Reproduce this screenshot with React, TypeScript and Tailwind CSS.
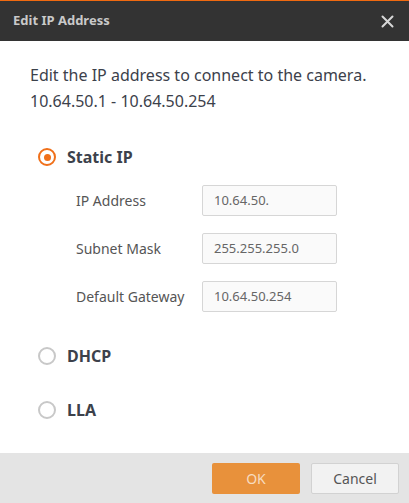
import React, { useState } from 'react';

const font = { fontFamily: '"Noto Sans", "Open Sans", sans-serif' };

function Radio({ checked }: { checked: boolean }) {
  return checked ? (
    <span className="flex h-[18px] w-[18px] items-center justify-center rounded-full border-2 border-[#f0701a]">
      <span className="h-[7px] w-[7px] rounded-full bg-[#f0701a]" />
    </span>
  ) : (
    <span className="h-[18px] w-[18px] rounded-full border-2 border-[#c8c8c8]" />
  );
}

function Field({ label, value }: { label: string; value: string }) {
  return (
    <div className="flex items-center">
      <span className="w-[126px] text-[14px] text-[#555]">{label}</span>
      <div className="flex h-[31px] w-[135px] items-center rounded-[2px] border border-[#d6d6d6] bg-[#fafafa] px-[11px] text-[13px] text-[#666]">
        {value}
      </div>
    </div>
  );
}

export default function App() {
  const [mode, setMode] = useState('static');

  const option = (key: string, label: string) => (
    <button
      onClick={() => setMode(key)}
      className="flex h-[24px] items-center gap-[11px] pl-[8px] text-[16px] font-bold text-[#3c414b]"
    >
      <Radio checked={mode === key} />
      {label}
    </button>
  );

  return (
    <div className="flex h-[503px] w-[409px] flex-col bg-white" style={font}>
      <div className="flex h-[41px] items-center justify-between border-t border-[#f06a10] bg-[#333333] pl-[13px] pr-[15px]">
        <span className="text-[13px] font-bold text-[#c9c9c9]">Edit IP Address</span>
        <svg width="13" height="13" viewBox="0 0 13 13" className="text-[#d8d8d8]">
          <path d="M1.5 1.5 L11.5 11.5 M11.5 1.5 L1.5 11.5" stroke="currentColor" strokeWidth="2" strokeLinecap="round" />
        </svg>
      </div>

      <div className="flex-1 pl-[30px] pt-[21px]">
        <p className="text-[16px] leading-[26px] text-[#3c414b]">
          Edit the IP address to connect to the camera.
          <br />
          10.64.50.1 - 10.64.50.254
        </p>

        <div className="mt-[31px]">{option('static', 'Static IP')}</div>

        <div className="mt-[16px] flex flex-col gap-[17px] pl-[46px]">
          <Field label="IP Address" value="10.64.50." />
          <Field label="Subnet Mask" value="255.255.255.0" />
          <Field label="Default Gateway" value="10.64.50.254" />
        </div>

        <div className="mt-[32px]">{option('dhcp', 'DHCP')}</div>
        <div className="mt-[30px]">{option('lla', 'LLA')}</div>
      </div>

      <div className="flex h-[50px] items-center justify-end gap-[11px] bg-[#e4e4e4] pr-[10px]">
        <button className="h-[31px] w-[88px] rounded-[2px] bg-[#e8913b] text-[14px] text-[#f7dcc0]">OK</button>
        <button className="h-[31px] w-[88px] rounded-[2px] border border-[#d2d2d2] bg-[#f2f2f2] text-[14px] text-[#555]">
          Cancel
        </button>
      </div>
    </div>
  );
}
